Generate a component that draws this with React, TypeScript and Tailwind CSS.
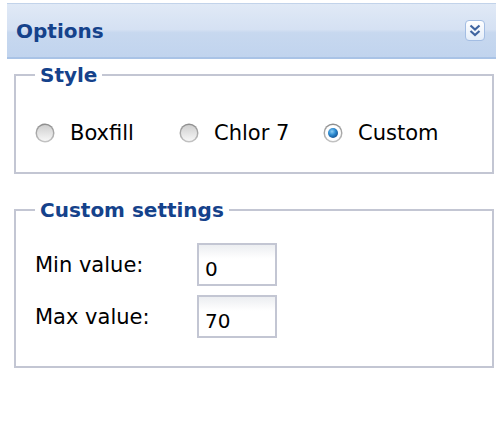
import { useId } from "react";

const font = "font-['DejaVu_Sans','Verdana',sans-serif]";

function Radio({ checked }: { checked?: boolean }) {
  const id = useId();
  return (
    <svg width="20" height="20" viewBox="0 0 20 20" className="shrink-0">
      <defs>
        <linearGradient id={`${id}-ring`} x1="0" y1="0" x2="0" y2="1">
          <stop offset="0" stopColor="#8c8c8c" />
          <stop offset="1" stopColor="#c4c4c4" />
        </linearGradient>
        <linearGradient id={`${id}-well`} x1="0" y1="0" x2="0" y2="1">
          <stop offset="0" stopColor="#cfcfcf" />
          <stop offset="1" stopColor="#f7f7f7" />
        </linearGradient>
        <radialGradient id={`${id}-dot`} cx="0.4" cy="0.35" r="0.7">
          <stop offset="0" stopColor="#8fd0f5" />
          <stop offset="0.5" stopColor="#2c8ad0" />
          <stop offset="1" stopColor="#16508f" />
        </radialGradient>
      </defs>
      <circle cx="10" cy="10" r="9.5" fill={`url(#${id}-ring)`} />
      <circle cx="10" cy="10" r="8" fill={checked ? "#ffffff" : `url(#${id}-well)`} />
      {checked && <circle cx="10" cy="10" r="5" fill={`url(#${id}-dot)`} />}
    </svg>
  );
}

function Fieldset({
  title,
  className,
  children,
}: {
  title: string;
  className: string;
  children: React.ReactNode;
}) {
  return (
    <fieldset className={`border-2 border-[#c3c6d3] pl-[19px] ${className}`}>
      <legend className="px-[5px] text-[20px] leading-[24px] font-bold text-[#15428b]">
        {title}
      </legend>
      {children}
    </fieldset>
  );
}

function NumberField({ label, value }: { label: string; value: string }) {
  return (
    <div className="flex h-[43px] items-center">
      <span className="w-[162px] text-[21px] leading-[24px] text-black">{label}</span>
      <input
        readOnly
        value={value}
        className="h-[43px] w-[80px] border-2 border-[#c3c6d3] bg-[linear-gradient(180deg,#eceef1_0%,#ffffff_35%)] px-[6px] pt-[8px] pb-0 text-[20px] text-black outline-none"
      />
    </div>
  );
}

const styles = [
  { label: "Boxfill", checked: false },
  { label: "Chlor 7", checked: false },
  { label: "Custom", checked: true },
];

export default function App() {
  return (
    <div className={`min-h-[442px] w-[496px] bg-white pt-[3px] ${font}`}>
      <div className="pl-[7px]">
        <div className="flex h-[56px] items-center border-t border-b-2 border-t-[#c2d3ea] border-b-[#a9c3e6] bg-[linear-gradient(180deg,#e0e9f6_0%,#d5e1f3_48%,#c7d8ef_54%,#c1d4ee_100%)] pr-[11px] pl-[9px]">
          <span className="text-[20px] font-bold text-[#15428b]">Options</span>
          <button className="ml-auto flex h-[21px] w-[20px] items-center justify-center rounded-[4px] border border-[#a3bde3] bg-[linear-gradient(180deg,#ffffff_0%,#e4edf9_100%)]">
            <svg width="14" height="15" viewBox="0 0 14 15" fill="none">
              <path d="M2.5 2.5l4.5 4 4.5-4M2.5 8l4.5 4 4.5-4" stroke="#3f64a0" strokeWidth="2.2" />
            </svg>
          </button>
        </div>
      </div>

      <div className="pr-[2px] pl-[14px]">
        <Fieldset title="Style" className="mt-[4px] pt-[34px] pb-[27px]">
          <div className="flex h-[24px] items-center">
            {styles.map(({ label, checked }) => (
              <label key={label} className="flex w-[144px] items-center gap-[15px]">
                <Radio checked={checked} />
                <span className="text-[21px] leading-[24px] text-black">{label}</span>
              </label>
            ))}
          </div>
        </Fieldset>

        <Fieldset title="Custom settings" className="mt-[24px] pt-[21px] pb-[28px]">
          <div className="flex flex-col gap-[9px]">
            <NumberField label="Min value:" value="0" />
            <NumberField label="Max value:" value="70" />
          </div>
        </Fieldset>
      </div>
    </div>
  );
}
